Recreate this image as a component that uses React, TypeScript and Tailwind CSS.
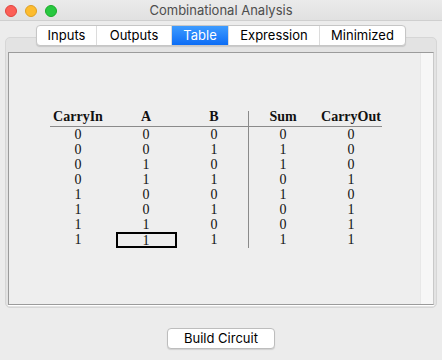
import React from "react";

const rows = [
  [0, 0, 0, 0, 0],
  [0, 0, 1, 1, 0],
  [0, 1, 0, 1, 0],
  [0, 1, 1, 0, 1],
  [1, 0, 0, 1, 0],
  [1, 0, 1, 0, 1],
  [1, 1, 0, 0, 1],
  [1, 1, 1, 1, 1],
];

const tabs = [
  { label: "Inputs", w: "w-[59px]" },
  { label: "Outputs", w: "w-[75px]" },
  { label: "Table", w: "w-[57px]" },
  { label: "Expression", w: "w-[91px]" },
  { label: "Minimized", w: "w-[86px]" },
];

const serif = { fontFamily: '"Liberation Serif", "Times New Roman", serif' };

export default function App() {
  return (
    <div
      className="w-[442px] h-[360px] bg-[#ececec] overflow-hidden flex flex-col antialiased"
      style={{ fontFamily: 'Inter, "Liberation Sans", sans-serif' }}
    >
      {/* title bar */}
      <div className="relative h-[21px] shrink-0 bg-gradient-to-b from-[#ebebeb] to-[#e1e1e1] border-b border-[#cfcfcf] flex items-center justify-center">
        <div className="absolute left-[5px] top-[5px] flex gap-[8px]">
          <span className="w-[12px] h-[12px] rounded-full bg-[#fc5f57] border border-[#e0443e]" />
          <span className="w-[12px] h-[12px] rounded-full bg-[#fdbc2e] border border-[#dea123]" />
          <span className="w-[12px] h-[12px] rounded-full bg-[#28c840] border border-[#1aab29]" />
        </div>
        <span className="text-[13px] text-[#4d4d4d] leading-none pt-[1px]">Combinational Analysis</span>
      </div>

      {/* tabs */}
      <div className="relative z-10 mt-[4px] flex justify-center">
        <div className="flex h-[21px] rounded-[4px] bg-white border border-[#c6c6c6] shadow-[0_1px_1px_rgba(0,0,0,0.12)] overflow-hidden">
          {tabs.map((t, i) => (
            <div
              key={t.label}
              className={`${t.w} flex items-center justify-center text-[13px] ${
                t.label === "Table"
                  ? "bg-gradient-to-b from-[#3d9bff] to-[#0a6cf5] text-white"
                  : "text-black"
              } ${i > 0 ? "border-l border-[#dcdcdc]" : ""}`}
            >
              {t.label}
            </div>
          ))}
        </div>
      </div>

      {/* tab panel */}
      <div className="-mt-[9px] mx-[5px] h-[271px] rounded-[5px] bg-[#e3e3e3] border border-[#d6d6d6] pt-[14px] px-[2px] pb-[2px] flex">
        <div className="flex-1 flex border border-[#9b9b9b] border-r-[#c9c9c9] bg-[#eeeeee] shadow-[0_1px_0_#ffffff]">
          <div className="flex-1 pt-[58px] pl-[35px]" style={serif}>
            <div className="flex text-[14px] text-[#111]">
              {/* inputs */}
              <div className="w-[204px]">
                <div className="h-[15px] flex">
                  {["CarryIn", "A", "B"].map((h) => (
                    <div key={h} className="w-[68px] text-center font-bold leading-[12px]">
                      {h}
                    </div>
                  ))}
                </div>
                <div className="h-px ml-[6px] bg-[#8a8a8a]" />
                {rows.map((r, ri) => (
                  <div key={ri} className="h-[15px] flex">
                    {r.slice(0, 3).map((v, ci) =>
                      ri === 7 && ci === 1 ? (
                        <div key={ci} className="w-[68px] flex justify-center">
                          <div className="w-[61px] h-[16px] box-border border-2 border-black flex justify-center leading-[13px]">
                            {v}
                          </div>
                        </div>
                      ) : (
                        <div key={ci} className="w-[68px] text-center leading-[15px]">
                          {v}
                        </div>
                      )
                    )}
                  </div>
                ))}
              </div>
              {/* outputs */}
              <div className="w-[137px] border-l border-[#8a8a8a] pb-[1px]">
                <div className="h-[15px] flex">
                  {["Sum", "CarryOut"].map((h) => (
                    <div key={h} className="w-[68px] text-center font-bold leading-[12px]">
                      {h}
                    </div>
                  ))}
                </div>
                <div className="h-px mr-[3px] bg-[#8a8a8a]" />
                {rows.map((r, ri) => (
                  <div key={ri} className="h-[15px] flex">
                    {r.slice(3).map((v, ci) => (
                      <div key={ci} className="w-[68px] text-center leading-[15px]">
                        {v}
                      </div>
                    ))}
                  </div>
                ))}
              </div>
            </div>
          </div>
          <div className="w-[13px] bg-[#f7f7f7] border-l border-[#e8e8e8]" />
        </div>
      </div>

      {/* button */}
      <div className="flex justify-center mt-[20px]">
        <button className="w-[108px] h-[21px] rounded-[4px] bg-white border border-[#bdbdbd] shadow-[0_1px_1px_rgba(0,0,0,0.12)] text-[13px] text-black leading-none">
          Build Circuit
        </button>
      </div>
    </div>
  );
}
